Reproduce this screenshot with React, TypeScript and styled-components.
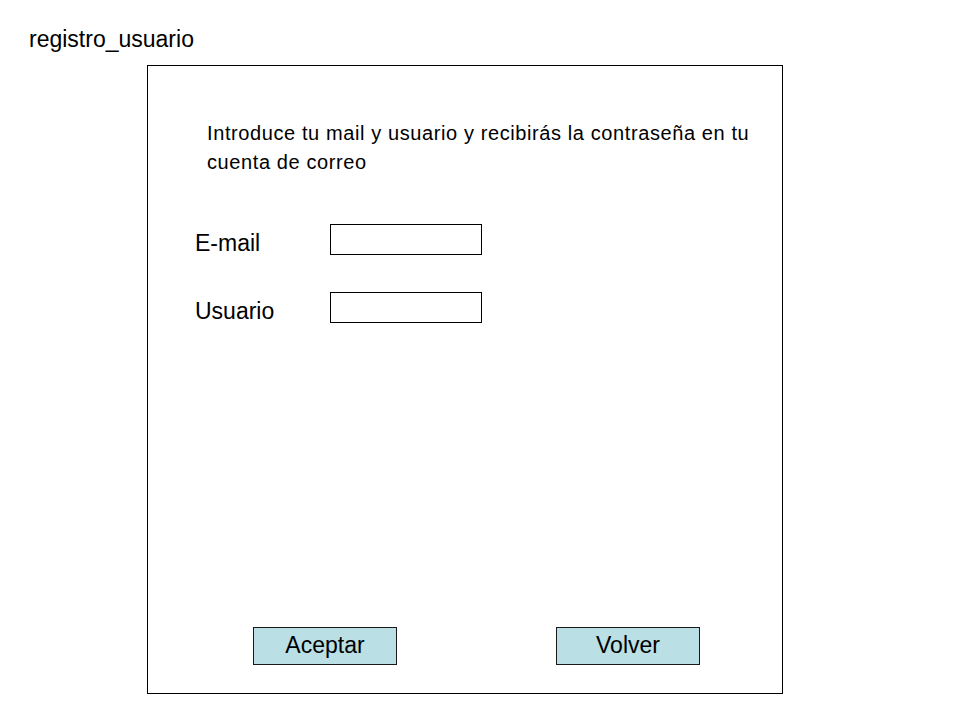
import styled, { createGlobalStyle } from "styled-components";

const GlobalStyle = createGlobalStyle`
  html, body {
    margin: 0;
    padding: 0;
    background: #ffffff;
  }

  body {
    font-family: "Liberation Sans", Arial, sans-serif;
    color: #000000;
  }
`;

const StyledPage = styled.div`
  width: 960px;
  height: 720px;
  padding-top: 28px;
  box-sizing: border-box;
`;

const StyledTitle = styled.h1`
  margin: 0 0 14px 29px;
  font-size: 23px;
  font-weight: normal;
  line-height: 23px;
`;

const StyledPanel = styled.div`
  margin-left: 147px;
  width: 636px;
  height: 629px;
  box-sizing: border-box;
  border: 1px solid #000000;
  display: flex;
  flex-direction: column;
`;

const StyledIntro = styled.p`
  margin: 53px 0 0 59px;
  width: 560px;
  font-size: 20px;
  line-height: 29px;
  letter-spacing: 0.6px;
`;

const StyledForm = styled.div`
  margin: 47px 0 0 47px;
  display: flex;
  flex-direction: column;
  gap: 37px;
`;

const StyledRow = styled.div`
  display: flex;
  align-items: flex-start;
`;

const StyledLabel = styled.label`
  width: 135px;
  margin-top: 8px;
  font-size: 23px;
  line-height: 23px;
`;

const StyledInput = styled.input`
  width: 152px;
  height: 31px;
  box-sizing: border-box;
  margin: 0;
  padding: 0 4px;
  border: 1px solid #000000;
  border-radius: 0;
  background: #ffffff;
  font-family: inherit;
  font-size: 16px;
  outline: none;
`;

const StyledActions = styled.div`
  margin-top: auto;
  padding: 0 0 28px 105px;
  display: flex;
  gap: 159px;
`;

const StyledButton = styled.button`
  width: 144px;
  height: 38px;
  box-sizing: border-box;
  margin: 0;
  padding: 0 0 2px;
  border: 1px solid #1a1a1a;
  border-radius: 0;
  background: #badfe4;
  color: #000000;
  font-family: inherit;
  font-size: 23px;
  line-height: 23px;
  cursor: pointer;
`;

const FIELDS = [
  { id: "email", label: "E-mail", type: "email" },
  { id: "usuario", label: "Usuario", type: "text" },
];

const App = () => {
  return (
    <>
      <GlobalStyle />
      <StyledPage>
        <StyledTitle>registro_usuario</StyledTitle>

        <StyledPanel>
          <StyledIntro>
            Introduce tu mail y usuario y recibirás la contraseña en tu cuenta
            de correo
          </StyledIntro>

          <StyledForm>
            {FIELDS.map((field) => (
              <StyledRow key={field.id}>
                <StyledLabel htmlFor={field.id}>{field.label}</StyledLabel>
                <StyledInput id={field.id} type={field.type} />
              </StyledRow>
            ))}
          </StyledForm>

          <StyledActions>
            <StyledButton type="button">Aceptar</StyledButton>
            <StyledButton type="button">Volver</StyledButton>
          </StyledActions>
        </StyledPanel>
      </StyledPage>
    </>
  );
};

export default App;
